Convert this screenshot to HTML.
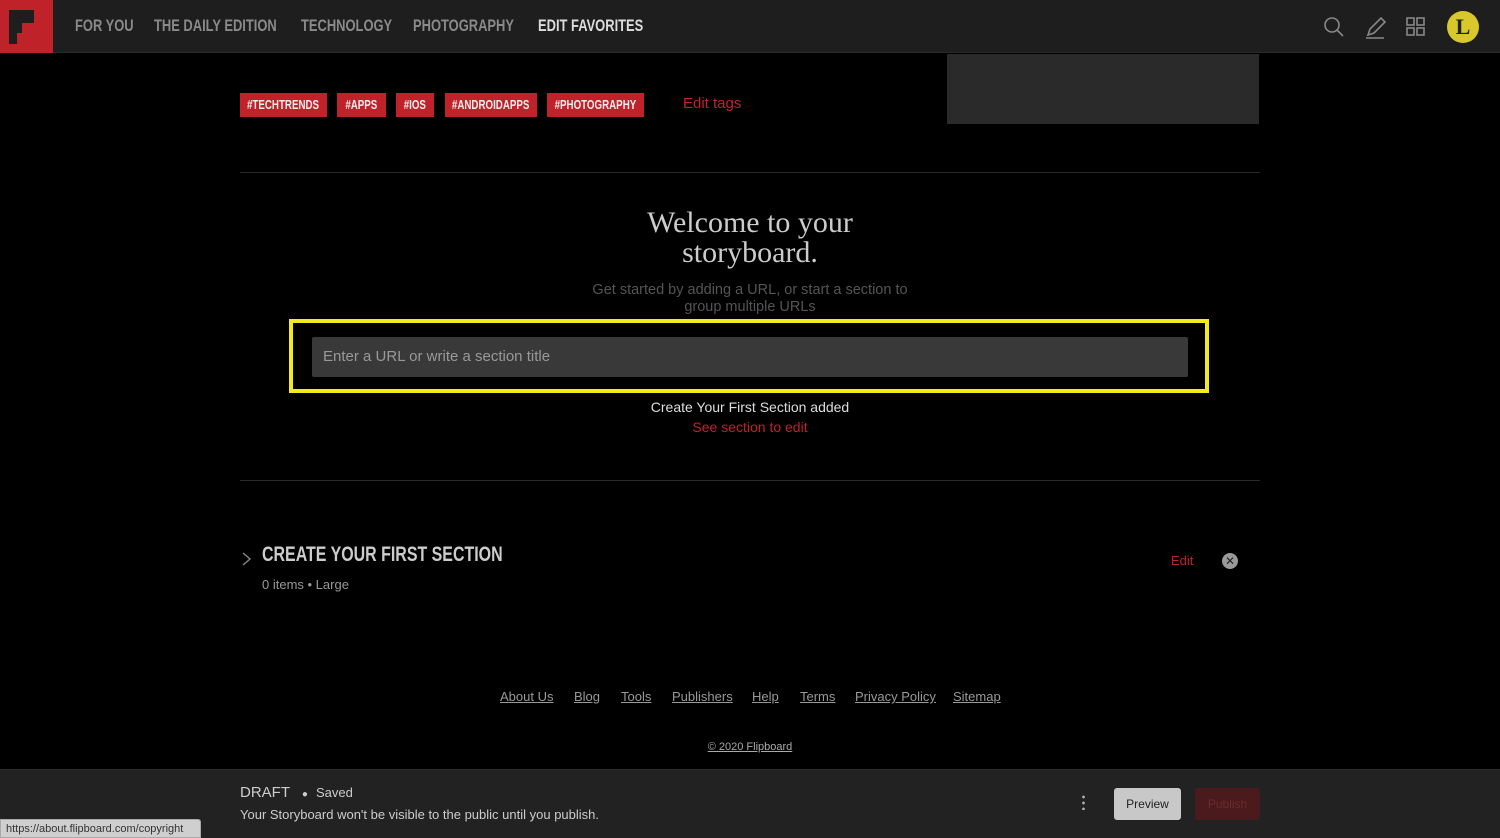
<!DOCTYPE html>
<html><head><meta charset="utf-8"><style>
*{margin:0;padding:0;box-sizing:border-box}
body{width:1500px;height:838px;background:#000;position:relative;overflow:hidden;font-family:"Liberation Sans",sans-serif;color:#ccc}
.a{position:absolute;white-space:nowrap}
.n{font-family:"Liberation Sans",sans-serif;font-weight:bold;transform:scaleX(0.76);transform-origin:0 50%}
.tag{position:absolute;top:93px;height:24px;background:#c0222a;color:#eee;font-size:13px;line-height:24px;text-align:center;overflow:visible}
.tag span{display:inline-block;font-weight:bold;transform:scaleX(0.75);transform-origin:50% 50%;margin:0 -30px}
.f a{color:#999;text-decoration:underline;font-size:13px;position:absolute;top:689px}
</style></head><body>
<div class="a" style="left:0;top:0;width:1500px;height:53px;background:#1e1e1e;border-bottom:1px solid #2a2a2a"></div>
<div class="a" style="left:0;top:0;width:53px;height:53px;background:#c0222a">
<svg width="53" height="53"><path d="M9 10H34V23H22V33H17V44H9Z" fill="#1e1e1e"/></svg></div>
<div class="a n" style="left:75px;top:16px;font-size:17px;color:#8a8a8a">FOR YOU</div>
<div class="a n" style="left:154px;top:16px;font-size:17px;color:#8a8a8a">THE DAILY EDITION</div>
<div class="a n" style="left:301px;top:16px;font-size:17px;color:#8a8a8a">TECHNOLOGY</div>
<div class="a n" style="left:413px;top:16px;font-size:17px;color:#8a8a8a">PHOTOGRAPHY</div>
<div class="a n" style="left:538px;top:16px;font-size:17px;color:#ddd">EDIT FAVORITES</div>
<svg class="a" style="left:1320px;top:14px" width="160" height="28" fill="none" stroke="#888" stroke-width="1.6">
<circle cx="12" cy="11" r="7"/><path d="M17 16L23 22"/>
<path d="M48 21L50 15L61 4L65 8L54 19ZM46 24H64"/>
<rect x="87" y="4" width="7" height="7"/><rect x="97" y="4" width="7" height="7"/><rect x="87" y="14" width="7" height="7"/><rect x="97" y="14" width="7" height="7"/>
</svg>
<div class="a" style="left:1447px;top:11px;width:32px;height:32px;border-radius:50%;background:#d8c82a;color:#222;font-family:'Liberation Serif',serif;font-weight:bold;font-size:22px;text-align:center;line-height:32px">L</div>
<div class="a" style="left:947px;top:54px;width:312px;height:70px;background:#2a2a2a"></div>
<div class="tag" style="left:240px;width:87px"><span>#TECHTRENDS</span></div>
<div class="tag" style="left:337px;width:49px"><span>#APPS</span></div>
<div class="tag" style="left:396px;width:38px"><span>#IOS</span></div>
<div class="tag" style="left:445px;width:92px"><span>#ANDROIDAPPS</span></div>
<div class="tag" style="left:547px;width:97px"><span>#PHOTOGRAPHY</span></div>
<div class="a" style="left:683px;top:95px;font-size:15px;color:#c0222a">Edit tags</div>
<div class="a" style="left:240px;top:172px;width:1020px;height:1px;background:#2a2a2a"></div>
<div class="a" style="left:0;width:1500px;top:208px;text-align:center;font-family:'Liberation Serif',serif;font-size:30px;line-height:30px;color:#ccc">Welcome to your<br>storyboard.</div>
<div class="a" style="left:0;width:1500px;top:282px;text-align:center;font-size:14.5px;line-height:17px;color:#555">Get started by adding a URL, or start a section to<br>group multiple URLs</div>
<div class="a" style="left:289px;top:319px;width:920px;height:74px;border:4px solid #f2ea1c"></div>
<div class="a" style="left:312px;top:337px;width:876px;height:40px;background:#393939;border-radius:2px;color:#999;font-size:15px;line-height:40px;padding-left:11px">Enter a URL or write a section title</div>
<div class="a" style="left:0;width:1500px;top:399px;text-align:center;font-size:14px;color:#ddd">Create Your First Section added</div>
<div class="a" style="left:0;width:1500px;top:419px;text-align:center;font-size:14px;color:#c0222a">See section to edit</div>
<div class="a" style="left:240px;top:480px;width:1020px;height:1px;background:#2a2a2a"></div>
<svg class="a" style="left:240px;top:550px" width="14" height="18" fill="none" stroke="#888" stroke-width="1.4"><path d="M3 3L10 9L3 15"/></svg>
<div class="a n" style="left:262px;top:543px;font-size:21px;color:#ccc">CREATE YOUR FIRST SECTION</div>
<div class="a" style="left:262px;top:577px;font-size:13px;color:#999">0 items • Large</div>
<div class="a" style="left:1171px;top:553px;font-size:13px;color:#c0222a">Edit</div>
<div class="a" style="left:1222px;top:553px;width:16px;height:16px;border-radius:50%;background:#999;color:#222;font-size:12px;line-height:16px;text-align:center">✕</div>
<div class="f">
<a style="left:500px">About Us</a><a style="left:574px">Blog</a><a style="left:621px">Tools</a><a style="left:672px">Publishers</a><a style="left:752px">Help</a><a style="left:800px">Terms</a><a style="left:855px">Privacy Policy</a><a style="left:953px">Sitemap</a>
</div>
<div class="a" style="left:0;width:1500px;top:741px;text-align:center;font-size:11px;color:#aaa;text-decoration:underline">© 2020 Flipboard</div>
<div class="a" style="left:0;top:769px;width:1500px;height:69px;background:#222;border-top:1px solid #2c2c2c"></div>
<div class="a" style="left:240px;top:784px;font-size:15px;color:#ccc">DRAFT <span style="font-size:10px;margin:0 8px">●</span><span style="font-size:13px">Saved</span></div>
<div class="a" style="left:240px;top:807px;font-size:13px;color:#ccc">Your Storyboard won't be visible to the public until you publish.</div>
<div class="a" style="left:1082px;top:794px;width:3px;height:16px;background:radial-gradient(circle,#aaa 1.3px,transparent 1.5px) 0 0/3px 6px"></div>
<div class="a" style="left:1114px;top:788px;width:67px;height:32px;background:#c8c8c8;border-radius:3px;color:#222;font-size:12px;line-height:32px;text-align:center">Preview</div>
<div class="a" style="left:1195px;top:788px;width:65px;height:32px;background:#4a1a1c;border-radius:3px;color:#6e2a2c;font-size:12px;line-height:32px;text-align:center">Publish</div>
<div class="a" style="left:0;top:819px;width:201px;height:19px;background:#cfcfcf;border:1px solid #aaa;border-radius:0 3px 0 0;color:#333;font-size:11px;line-height:18px;padding-left:5px">https://about.flipboard.com/copyright</div>
</body></html>
